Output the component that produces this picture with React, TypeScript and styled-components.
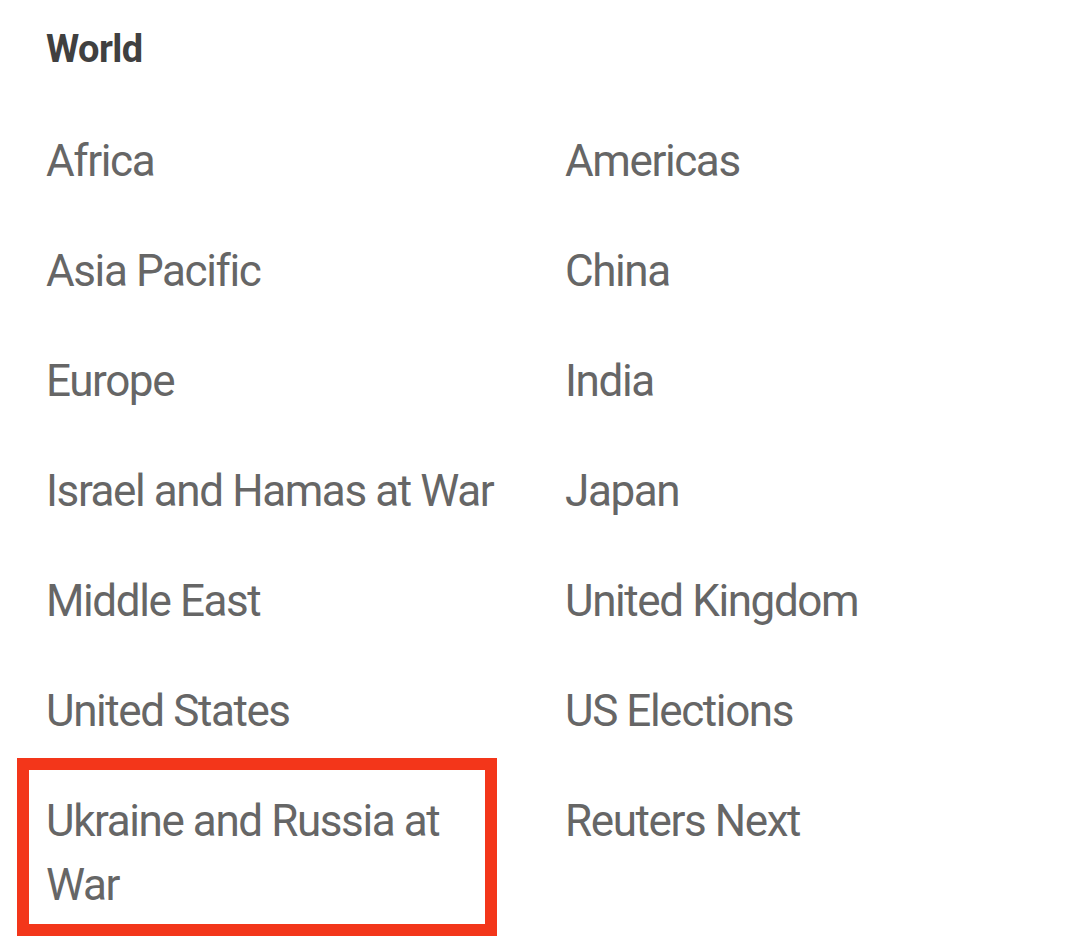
import React from 'react';
import styled, { createGlobalStyle } from 'styled-components';

const GlobalStyle = createGlobalStyle`
  html, body {
    margin: 0;
    background: #fff;
  }
  body {
    font-family: Roboto, "Noto Sans", sans-serif;
    -webkit-font-smoothing: antialiased;
  }
`;

const Section = styled.section`
  padding: 27px 47px 0 46px;
  box-sizing: border-box;
  width: 1080px;
  min-height: 936px;
  overflow: hidden;
`;

const Heading = styled.h2`
  margin: 0 0 58px;
  font-size: 38px;
  line-height: 44px;
  font-weight: 700;
  color: #404040;
  letter-spacing: -0.6px;
`;

const LinkGrid = styled.ul`
  list-style: none;
  margin: 0;
  padding: 0;
  display: grid;
  grid-template-columns: 1fr 1fr;
  column-gap: 51px;
  row-gap: 46px;
`;

const Item = styled.li<{ $highlighted?: boolean }>`
  position: relative;
  font-size: 44px;
  line-height: 64px;
  color: #666;
  letter-spacing: -1.4px;

  ${(p) =>
    p.$highlighted &&
    `
    &::after {
      content: '';
      position: absolute;
      left: -29px;
      top: -31px;
      width: 480px;
      height: 178px;
      box-sizing: border-box;
      border: 12px solid #f3361a;
      pointer-events: none;
    }
  `}
`;

const links = [
  'Africa',
  'Americas',
  'Asia Pacific',
  'China',
  'Europe',
  'India',
  'Israel and Hamas at War',
  'Japan',
  'Middle East',
  'United Kingdom',
  'United States',
  'US Elections',
  'Ukraine and Russia at War',
  'Reuters Next',
];

export default function App() {
  return (
    <>
      <GlobalStyle />
      <Section>
        <Heading>World</Heading>
        <LinkGrid>
          {links.map((label) => (
            <Item key={label} $highlighted={label === 'Ukraine and Russia at War'}>
              {label}
            </Item>
          ))}
        </LinkGrid>
      </Section>
    </>
  );
}
